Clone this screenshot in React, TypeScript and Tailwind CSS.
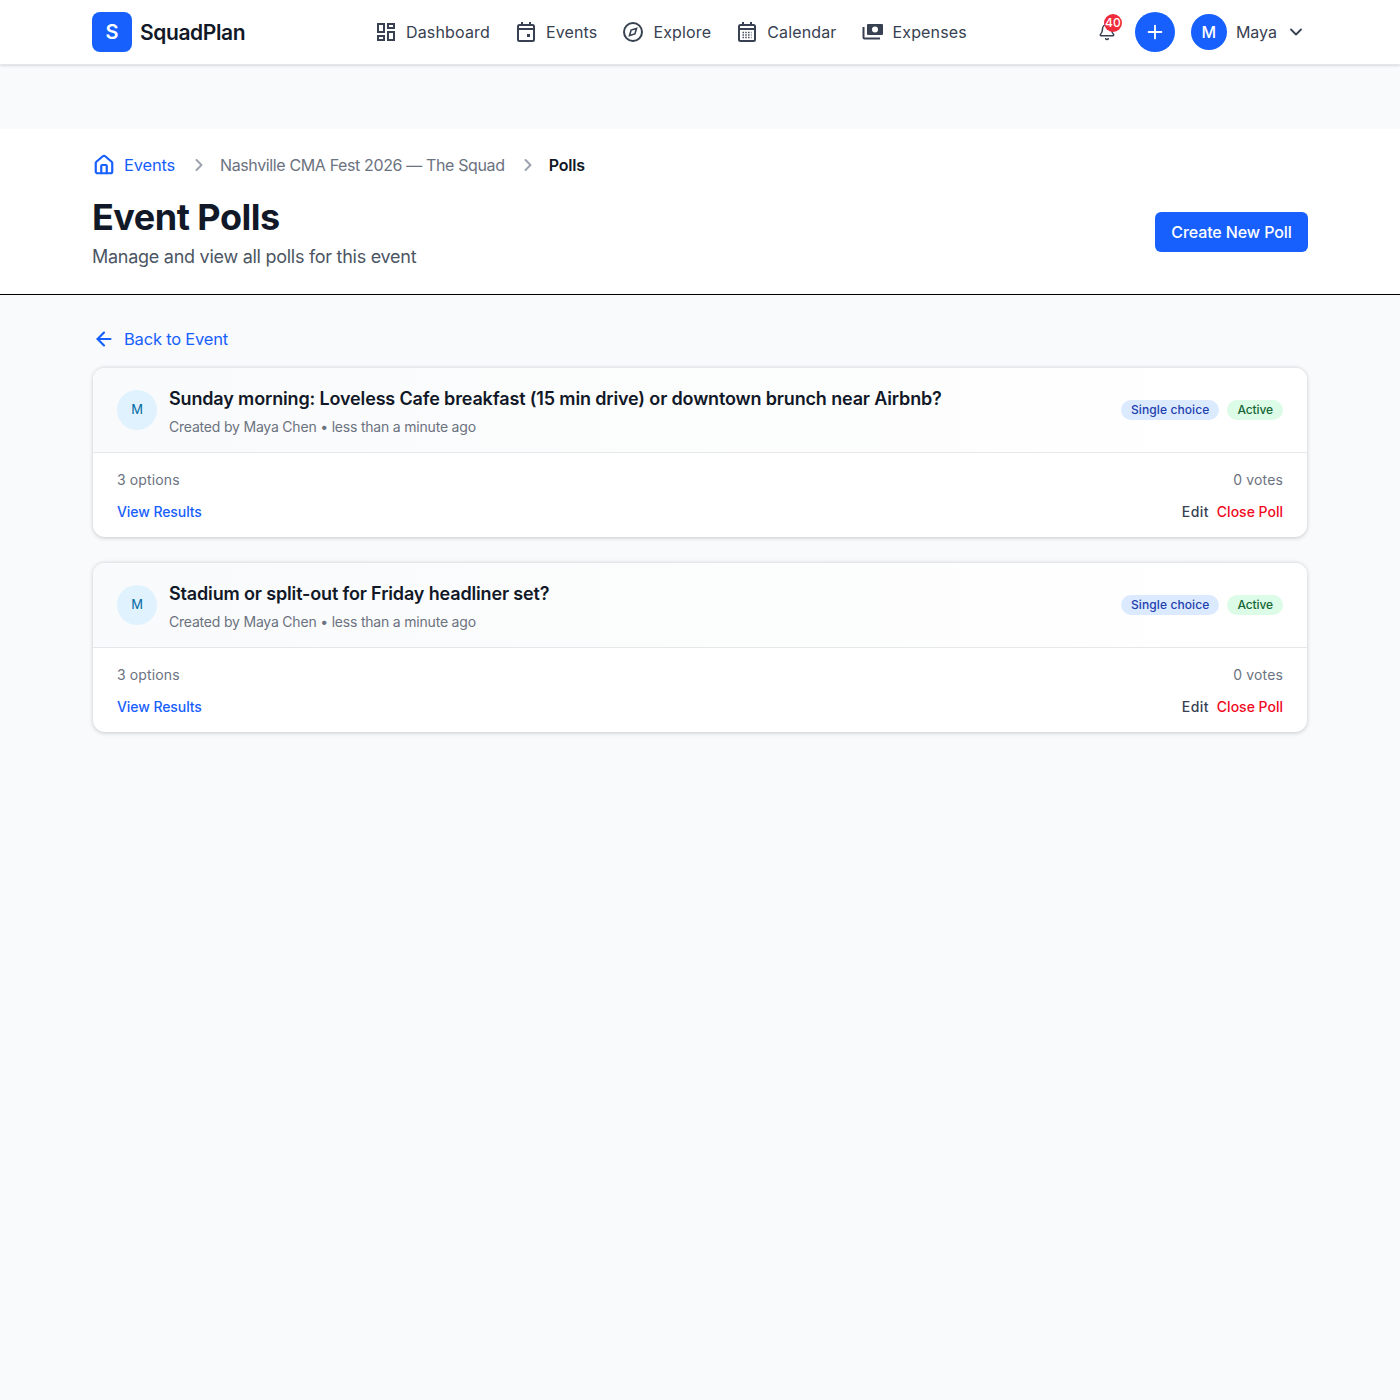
// Event polls page for SquadPlan
import React from 'react';
import { ChevronDown, ChevronRight, ArrowLeft, Plus, Bell, Home } from 'lucide-react';

const FONT = "font-['Inter',sans-serif]";

// ── Nav icons ──────────────────────────────────────────────────────────────────
const DashboardIcon = () => (
  <svg width="20" height="20" viewBox="0 0 20 20" fill="none" stroke="#374151" strokeWidth="2" className="mr-[10px]">
    <rect x="2" y="2" width="6" height="8" />
    <rect x="12" y="2" width="6" height="4" />
    <rect x="2" y="14" width="6" height="4" />
    <rect x="12" y="10" width="6" height="8" />
  </svg>
);

const EventsIcon = () => (
  <svg width="20" height="22" viewBox="0 0 20 22" fill="none" stroke="#374151" strokeWidth="2" className="mr-[10px]">
    <rect x="2" y="4" width="16" height="16" rx="1.5" />
    <path d="M2 8h16M6 1v4M14 1v4" />
    <rect x="11" y="13" width="3" height="3" fill="#374151" stroke="none" />
  </svg>
);

const ExploreIcon = () => (
  <svg width="20" height="20" viewBox="0 0 20 20" fill="none" stroke="#374151" strokeWidth="2" className="mr-[10px]">
    <circle cx="10" cy="10" r="9" />
    <path d="M13.5 6.5l-1.6 5.4-5.4 1.6 1.6-5.4z" strokeWidth="1.6" />
  </svg>
);

const CalendarIcon = () => (
  <svg width="20" height="22" viewBox="0 0 20 22" fill="none" stroke="#374151" strokeWidth="2" className="mr-[10px]">
    <rect x="2" y="4" width="16" height="16" rx="1.5" />
    <path d="M2 8h16M6 1v4M14 1v4" />
    <path d="M5.5 11.5h9M5.5 14h9M5.5 16.5h9" strokeWidth="1.3" strokeDasharray="1.4 1.4" />
  </svg>
);

const ExpensesIcon = () => (
  <svg width="22" height="18" viewBox="0 0 22 18" fill="none" className="-ml-px mr-[9px]">
    <rect x="5" y="1" width="16" height="11" rx="1" fill="#374151" />
    <circle cx="13" cy="6.5" r="3" fill="#fff" />
    <path d="M1.5 4v10.5a1 1 0 001 1H18" stroke="#374151" strokeWidth="2" />
  </svg>
);

const NAV_ITEMS = [
  { label: 'Dashboard', icon: <DashboardIcon /> },
  { label: 'Events', icon: <EventsIcon /> },
  { label: 'Explore', icon: <ExploreIcon /> },
  { label: 'Calendar', icon: <CalendarIcon /> },
  { label: 'Expenses', icon: <ExpensesIcon /> },
];

const POLLS = [
  { id: 1, question: 'Sunday morning: Loveless Cafe breakfast (15 min drive) or downtown brunch near Airbnb?' },
  { id: 2, question: 'Stadium or split-out for Friday headliner set?' },
];

// ── Top bar ────────────────────────────────────────────────────────────────────
const TopBar = () => (
  <header className="relative z-10 h-[65px] bg-white border-b border-gray-200 shadow-sm">
    <div className="mx-auto flex h-16 w-[1216px] items-center">
      <div className="flex w-[284px] items-center gap-2">
        <div className="flex h-10 w-10 items-center justify-center rounded-lg bg-[#1760fd] text-xl font-semibold text-white">
          S
        </div>
        <span className="pt-[2px] text-[21px] font-semibold tracking-[-0.4px] text-[#111827]">SquadPlan</span>
      </div>
      <nav className="flex items-center gap-[26px]">
        {NAV_ITEMS.map((item) => (
          <a key={item.label} className="flex items-center text-[16px] tracking-[0.15px] text-[#374151]">
            {item.icon}
            <span>{item.label}</span>
          </a>
        ))}
      </nav>
      <div className="ml-auto flex items-center">
        <div className="relative mr-[19px]">
          <Bell size={18} strokeWidth={2} className="text-[#374151]" />
          <span className="absolute -right-[6px] -top-[9px] flex h-[18px] w-[18px] items-center justify-center rounded-full bg-[#ef2b3c] text-[12px] font-medium text-white">
            40
          </span>
        </div>
        <button className="flex h-10 w-10 items-center justify-center rounded-full bg-[#1760fd] text-white">
          <Plus size={22} strokeWidth={2} />
        </button>
        <div className="ml-4 flex h-9 w-9 items-center justify-center rounded-full bg-[#1760fd] text-base font-medium text-white">
          M
        </div>
        <span className="ml-[9px] text-[16px] text-[#374151]">Maya</span>
        <ChevronDown size={20} strokeWidth={2.2} className="ml-[9px] mr-[2px] text-[#374151]" />
      </div>
    </div>
  </header>
);

// ── Page header ────────────────────────────────────────────────────────────────
const PageHeader = () => (
  <section className="mt-[64px] h-[166px] border-b border-black bg-white">
    <div className="mx-auto w-[1216px] pt-6">
      <div className="flex h-6 items-center text-[16px] tracking-[-0.2px]">
        <Home size={22} strokeWidth={2.4} className="ml-[1px] text-[#1760fd]" />
        <span className="ml-[9px] text-[16.5px] text-[#1760fd]">Events</span>
        <ChevronRight size={20} strokeWidth={2.4} className="ml-[14px] mr-[11px] text-[#9ca3af]" />
        <span className="tracking-[-0.37px] text-[#6b7280]">Nashville CMA Fest 2026 — The Squad</span>
        <ChevronRight size={20} strokeWidth={2.4} className="ml-[13px] mr-[11px] text-[#9ca3af]" />
        <span className="font-semibold text-[#111827]">Polls</span>
      </div>
      <div className="mt-5 flex items-center justify-between">
        <div>
          <h1 className="text-[36px] font-bold leading-[40px] tracking-[-0.5px] text-[#111827]">Event Polls</h1>
          <p className="mt-[8px] text-[18px] leading-[24px] tracking-[-0.27px] text-[#4b5563]">
            Manage and view all polls for this event
          </p>
        </div>
        <button className="mb-[2px] h-10 w-[153px] rounded-md bg-[#1760fd] text-[16px] font-medium tracking-[-0.1px] text-white">
          Create New Poll
        </button>
      </div>
    </div>
  </section>
);

// ── Poll card ──────────────────────────────────────────────────────────────────
const PollCard = ({ question }: { question: string }) => (
  <article className="mx-px rounded-xl border-t border-gray-200 bg-white shadow-[0_1px_4px_rgba(0,0,0,0.2)]">
    <div className="flex h-[85px] items-center justify-between rounded-t-xl border-b border-gray-200 bg-gradient-to-r from-[#f9fafb] to-white px-6">
      <div className="flex items-center gap-3">
        <div className="flex h-10 w-10 items-center justify-center rounded-full bg-[#e0f2fe] text-[13px] text-[#0369a1]">
          M
        </div>
        <div className="pt-[2px]">
          <h3 className="text-[18px] font-semibold leading-[28px] tracking-[-0.15px] text-[#111827]">{question}</h3>
          <p className="mt-[4px] text-[14px] leading-[20px] tracking-[-0.2px] text-[#6b7280]">
            Created by Maya Chen • less than a minute ago
          </p>
        </div>
      </div>
      <div className="flex items-center gap-2">
        <span className="flex h-5 items-center rounded-full bg-[#dbeafe] px-[10px] text-[12px] font-medium tracking-[0.1px] text-[#1e40af]">
          Single choice
        </span>
        <span className="flex h-5 items-center rounded-full bg-[#dcfce7] px-[10px] text-[12px] font-medium tracking-[-0.1px] text-[#166534]">
          Active
        </span>
      </div>
    </div>
    <div className="px-6 pb-[15px] pt-[17px]">
      <div className="flex justify-between text-[14px] leading-[20px] tracking-[0.13px] text-[#6b7280]">
        <span>3 options</span>
        <span>0 votes</span>
      </div>
      <div className="mt-3 flex justify-between text-[14px] font-medium leading-[20px] tracking-[-0.08px]">
        <a className="text-[#1760fd]">View Results</a>
        <div className="flex gap-2">
          <a className="tracking-[0.4px] text-[#374151]">Edit</a>
          <a className="tracking-[0px] text-[#f00a1e]">Close Poll</a>
        </div>
      </div>
    </div>
  </article>
);

export default function App() {
  return (
    <div className={`min-h-[1400px] bg-[#f9fafb] ${FONT}`}>
      <TopBar />
      <PageHeader />
      <main className="mx-auto w-[1216px] pt-[32px]">
        <a className="flex h-6 items-center text-[16.5px] tracking-[-0.2px] text-[#1760fd]">
          <ArrowLeft size={22} strokeWidth={2.4} className="ml-[1px] mr-[9px]" />
          Back to Event
        </a>
        <div className="mt-4 flex flex-col gap-[25px]">
          {POLLS.map((p) => (
            <PollCard key={p.id} question={p.question} />
          ))}
        </div>
      </main>
    </div>
  );
}
